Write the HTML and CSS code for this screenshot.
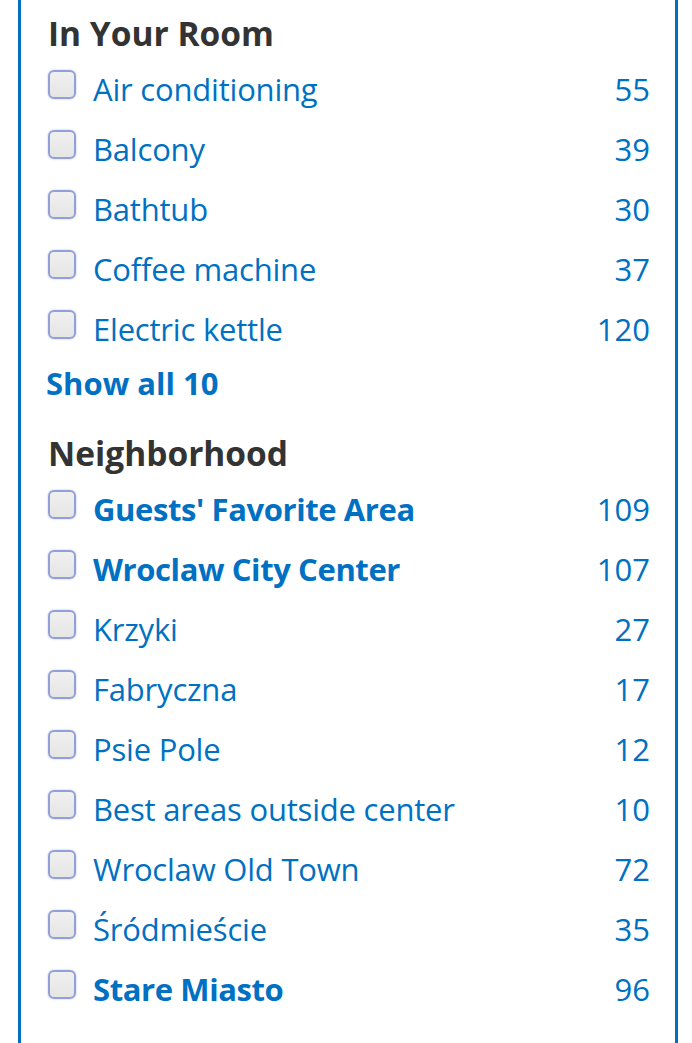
FILE: index.html
```html
<!DOCTYPE html>
<html>
<head>
<meta charset="utf-8">
<link rel="stylesheet" href="styles.css">
</head>
<body>
<div class="panel">
  <section class="group">
    <h3 class="group-title">In Your Room</h3>
    <ul class="opts">
      <li class="opt"><span class="box"></span><span class="label">Air conditioning</span><span class="count">55</span></li>
      <li class="opt"><span class="box"></span><span class="label">Balcony</span><span class="count">39</span></li>
      <li class="opt"><span class="box"></span><span class="label">Bathtub</span><span class="count">30</span></li>
      <li class="opt"><span class="box"></span><span class="label">Coffee machine</span><span class="count">37</span></li>
      <li class="opt"><span class="box"></span><span class="label">Electric kettle</span><span class="count">120</span></li>
    </ul>
    <a class="show-all">Show all 10</a>
  </section>
  <section class="group">
    <h3 class="group-title">Neighborhood</h3>
    <ul class="opts">
      <li class="opt"><span class="box"></span><span class="label strong">Guests' Favorite Area</span><span class="count">109</span></li>
      <li class="opt"><span class="box"></span><span class="label strong">Wroclaw City Center</span><span class="count">107</span></li>
      <li class="opt"><span class="box"></span><span class="label">Krzyki</span><span class="count">27</span></li>
      <li class="opt"><span class="box"></span><span class="label">Fabryczna</span><span class="count">17</span></li>
      <li class="opt"><span class="box"></span><span class="label">Psie Pole</span><span class="count">12</span></li>
      <li class="opt"><span class="box"></span><span class="label">Best areas outside center</span><span class="count">10</span></li>
      <li class="opt"><span class="box"></span><span class="label">Wroclaw Old Town</span><span class="count">72</span></li>
      <li class="opt"><span class="box"></span><span class="label">Śródmieście</span><span class="count">35</span></li>
      <li class="opt"><span class="box"></span><span class="label strong">Stare Miasto</span><span class="count">96</span></li>
    </ul>
  </section>
</div>
</body>
</html>
```

FILE: styles.css
```css
html, body {
  margin: 0;
  padding: 0;
  background: #fff;
}
body {
  font-family: "Open Sans", "Noto Sans", sans-serif;
  font-size: 31px;
}
.panel {
  box-sizing: border-box;
  margin-left: 18px;
  width: 660px;
  min-height: 1043px;
  border-left: 3px solid #0071c2;
  border-right: 3px solid #0071c2;
  padding: 0 25px 0 27px;
}
.group-title {
  margin: 0;
  padding: 13px 0 7px 0;
  line-height: 40px;
  font-size: 33.5px;
  font-weight: 700;
  color: #333;
}
.opts {
  list-style: none;
  margin: 0;
  padding: 0;
}
.opt {
  display: flex;
  align-items: flex-start;
  height: 60px;
  color: #0071c2;
}
.box {
  box-sizing: border-box;
  flex: none;
  width: 28px;
  height: 29px;
  margin-top: 10px;
  border: 2px solid #93a0d8;
  border-radius: 6px;
  background: linear-gradient(#f0f0f0, #e5e5e5);
  box-shadow: 0 0 2px rgba(120, 138, 212, 0.6);
}
.label {
  flex: 1;
  margin-left: 17px;
  line-height: 58px;
  letter-spacing: -0.2px;
}
.label.strong {
  font-weight: 700;
  letter-spacing: -0.4px;
}
.count {
  line-height: 58px;
}
.show-all {
  display: block;
  margin-bottom: 14px;
  margin-left: -2px;
  line-height: 46px;
  font-weight: 700;
  color: #0071c2;
}
```
